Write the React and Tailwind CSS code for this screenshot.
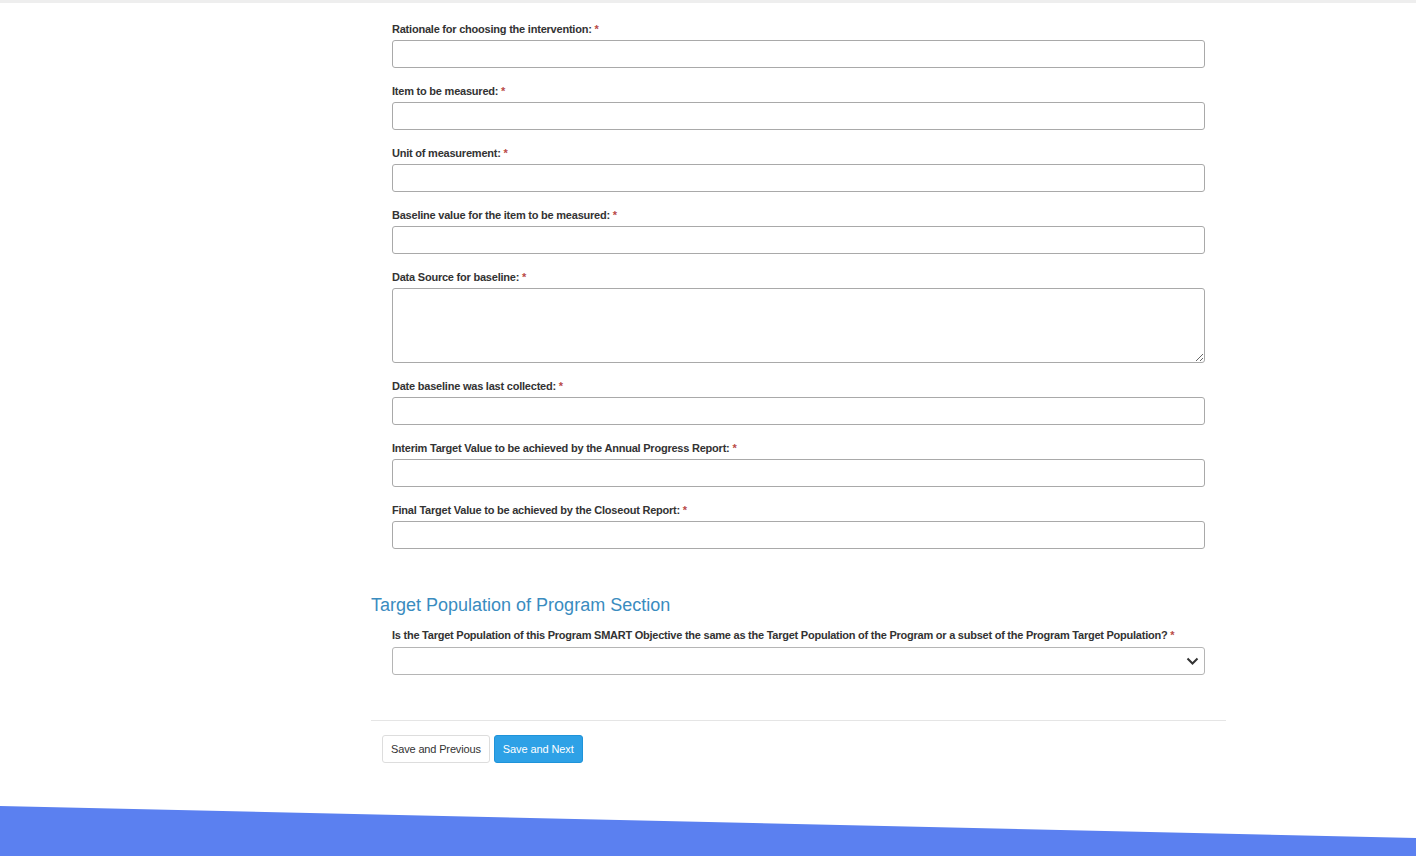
import React from "react";

const Star = () => <span className="text-[#b94a48]"> *</span>;

function Field({ label, textarea }) {
  return (
    <div className="mb-[16px]">
      <label className="block text-[11px] leading-[14px] font-bold tracking-[-0.22px] text-[#333] mb-[4px]">
        {label}
        <Star />
      </label>
      {textarea ? (
        <textarea className="block w-full h-[75px] border border-[#a9a9a9] rounded-[3px] bg-white outline-none resize-y" />
      ) : (
        <input className="block w-full h-[28px] border border-[#a9a9a9] rounded-[3px] bg-white outline-none" />
      )}
    </div>
  );
}

export default function App() {
  return (
    <div
      className="w-[1416px] h-[856px] bg-white flex flex-col overflow-hidden"
      style={{ fontFamily: '"Liberation Sans", Arial, sans-serif' }}
    >
      <div className="h-[3px] bg-[#eeeeee] shrink-0" />
      <div className="flex-1 flex justify-start pl-[371px]">
        <div className="w-[855px]">
          <div className="px-[21px] pt-[19px]">
            <Field label="Rationale for choosing the intervention:" />
            <Field label="Item to be measured:" />
            <Field label="Unit of measurement:" />
            <Field label="Baseline value for the item to be measured:" />
            <Field label="Data Source for baseline:" textarea />
            <Field label="Date baseline was last collected:" />
            <Field label="Interim Target Value to be achieved by the Annual Progress Report:" />
            <Field label="Final Target Value to be achieved by the Closeout Report:" />
          </div>
          <h3 className="text-[18px] leading-[20px] text-[#3a8cbf] mt-[46px] mb-[13px]">
            Target Population of Program Section
          </h3>
          <div className="px-[21px]">
            <label className="block text-[11px] leading-[14px] font-bold tracking-[-0.24px] text-[#333] mb-[5px]">
              Is the Target Population of this Program SMART Objective the same as the Target Population of the Program or a subset of the Program Target Population?
              <Star />
            </label>
            <div className="relative h-[28px] border border-[#b5b5b5] rounded-[3px] bg-white">
              <svg
                className="absolute right-[5px] top-[9px]"
                width="13"
                height="9"
                viewBox="0 0 13 9"
                fill="none"
              >
                <path d="M1.5 1.5 L6.5 6.5 L11.5 1.5" stroke="#333" strokeWidth="2" />
              </svg>
            </div>
          </div>
          <div className="mt-[45px] border-t border-[#e5e5e5] pt-[14px] px-[11px] flex gap-[4px]">
            <button className="h-[28px] px-[8px] text-[11px] tracking-[-0.15px] text-[#333] bg-white border border-[#dddddd] rounded-[3px]">
              Save and Previous
            </button>
            <button className="h-[28px] px-[8px] text-[11px] tracking-[-0.1px] text-white bg-[#2ea1e6] border border-[#1f93d9] rounded-[3px]">
              Save and Next
            </button>
          </div>
        </div>
      </div>
      <div className="h-[50px] shrink-0 bg-[#5b80f0] [clip-path:polygon(0_0,100%_32px,100%_100%,0_100%)]" />
    </div>
  );
}
